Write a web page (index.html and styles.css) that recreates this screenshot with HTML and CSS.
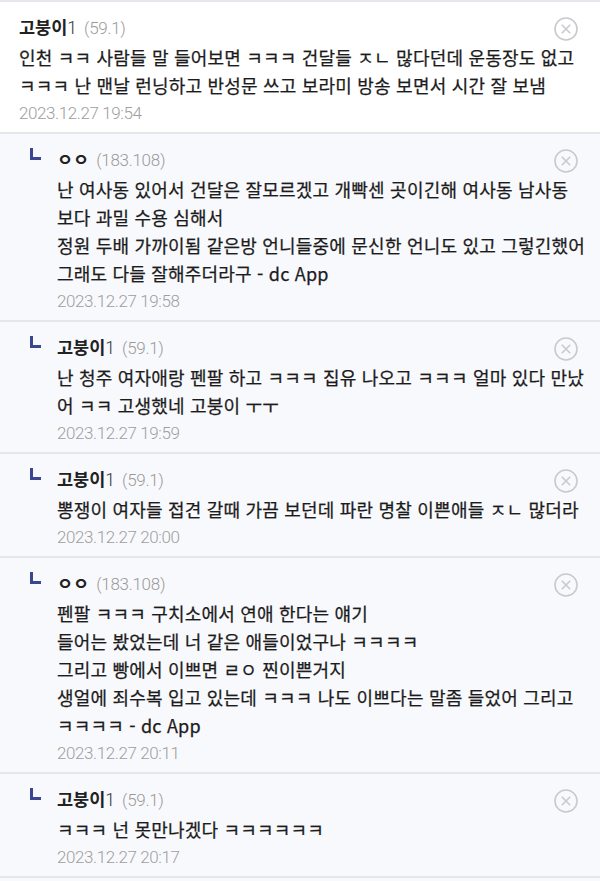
FILE: index.html
```html
<!DOCTYPE html>
<html lang="ko">
<head>
  <meta charset="UTF-8" />
  <meta name="viewport" content="width=device-width, initial-scale=1.0"/>
  <title>댓글</title>
  <link rel="stylesheet" href="styles.css">
</head>
<body>
  <ul class="cmt-list">
    <li class="cmt">
      <div class="cmt-body">
        <div class="cmt-head"><span class="nick">고붕이<span class="nick-no">1</span></span><span class="ip">(59.1)</span></div>
        <p class="cmt-txt">인천 ㅋㅋ 사람들 말 들어보면 ㅋㅋㅋ 건달들 ㅈㄴ 많다던데 운동장도 없고<br>ㅋㅋㅋ 난 맨날 런닝하고 반성문 쓰고 보라미 방송 보면서 시간 잘 보냄</p>
        <div class="cmt-date">2023.12.27 19:54</div>
      </div>
      <button class="del-btn" title="삭제">
        <svg width="24" height="24" viewBox="0 0 24 24"><circle cx="12" cy="12" r="11" /><path d="M7.8 7.8l8.4 8.4M16.2 7.8l-8.4 8.4" /></svg>
      </button>
    </li>

    <li class="cmt reply">
      <span class="reply-mark"></span>
      <div class="cmt-body">
        <div class="cmt-head"><span class="nick">ㅇㅇ</span><span class="ip">(183.108)</span></div>
        <p class="cmt-txt">난 여사동 있어서 건달은 잘모르겠고 개빡센 곳이긴해 여사동 남사동<br>보다 과밀 수용 심해서<br>정원 두배 가까이됨 같은방 언니들중에 문신한 언니도 있고 그렇긴했어<br>그래도 다들 잘해주더라구 - dc App</p>
        <div class="cmt-date">2023.12.27 19:58</div>
      </div>
      <button class="del-btn" title="삭제">
        <svg width="24" height="24" viewBox="0 0 24 24"><circle cx="12" cy="12" r="11" /><path d="M7.8 7.8l8.4 8.4M16.2 7.8l-8.4 8.4" /></svg>
      </button>
    </li>

    <li class="cmt reply">
      <span class="reply-mark"></span>
      <div class="cmt-body">
        <div class="cmt-head"><span class="nick">고붕이<span class="nick-no">1</span></span><span class="ip">(59.1)</span></div>
        <p class="cmt-txt">난 청주 여자애랑 펜팔 하고 ㅋㅋㅋ 집유 나오고 ㅋㅋㅋ 얼마 있다 만났<br>어 ㅋㅋ 고생했네 고붕이 ㅜㅜ</p>
        <div class="cmt-date">2023.12.27 19:59</div>
      </div>
      <button class="del-btn" title="삭제">
        <svg width="24" height="24" viewBox="0 0 24 24"><circle cx="12" cy="12" r="11" /><path d="M7.8 7.8l8.4 8.4M16.2 7.8l-8.4 8.4" /></svg>
      </button>
    </li>

    <li class="cmt reply">
      <span class="reply-mark"></span>
      <div class="cmt-body">
        <div class="cmt-head"><span class="nick">고붕이<span class="nick-no">1</span></span><span class="ip">(59.1)</span></div>
        <p class="cmt-txt">뽕쟁이 여자들 접견 갈때 가끔 보던데 파란 명찰 이쁜애들 ㅈㄴ 많더라</p>
        <div class="cmt-date">2023.12.27 20:00</div>
      </div>
      <button class="del-btn" title="삭제">
        <svg width="24" height="24" viewBox="0 0 24 24"><circle cx="12" cy="12" r="11" /><path d="M7.8 7.8l8.4 8.4M16.2 7.8l-8.4 8.4" /></svg>
      </button>
    </li>

    <li class="cmt reply">
      <span class="reply-mark"></span>
      <div class="cmt-body">
        <div class="cmt-head"><span class="nick">ㅇㅇ</span><span class="ip">(183.108)</span></div>
        <p class="cmt-txt">펜팔 ㅋㅋㅋ 구치소에서 연애 한다는 얘기<br>들어는 봤었는데 너 같은 애들이었구나 ㅋㅋㅋㅋ<br>그리고 빵에서 이쁘면 ㄹㅇ 찐이쁜거지<br>생얼에 죄수복 입고 있는데 ㅋㅋㅋ 나도 이쁘다는 말좀 들었어 그리고<br>ㅋㅋㅋㅋ - dc App</p>
        <div class="cmt-date">2023.12.27 20:11</div>
      </div>
      <button class="del-btn" title="삭제">
        <svg width="24" height="24" viewBox="0 0 24 24"><circle cx="12" cy="12" r="11" /><path d="M7.8 7.8l8.4 8.4M16.2 7.8l-8.4 8.4" /></svg>
      </button>
    </li>

    <li class="cmt reply">
      <span class="reply-mark"></span>
      <div class="cmt-body">
        <div class="cmt-head"><span class="nick">고붕이<span class="nick-no">1</span></span><span class="ip">(59.1)</span></div>
        <p class="cmt-txt">ㅋㅋㅋ 넌 못만나겠다 ㅋㅋㅋㅋㅋㅋ</p>
        <div class="cmt-date">2023.12.27 20:17</div>
      </div>
      <button class="del-btn" title="삭제">
        <svg width="24" height="24" viewBox="0 0 24 24"><circle cx="12" cy="12" r="11" /><path d="M7.8 7.8l8.4 8.4M16.2 7.8l-8.4 8.4" /></svg>
      </button>
    </li>
  </ul>
</body>
</html>
```

FILE: styles.css
```css
html, body {
  margin: 0;
  padding: 0;
  background: #f8f9fc;
  font-family: 'Noto Sans CJK KR', 'Noto Sans', sans-serif;
  color: #1c1c1c;
}

.cmt-list {
  list-style: none;
  margin: 0;
  padding: 0;
  border-top: 2px solid #e6e7ec;
}

.cmt {
  display: flex;
  align-items: flex-start;
  padding: 12px 22px 6px 19px;
  background: #fff;
  border-bottom: 2px solid #e6e7ec;
}
.cmt.reply {
  background: #f8f9fc;
  padding-left: 30px;
}

.reply-mark {
  flex-shrink: 0;
  width: 8px;
  height: 9px;
  margin: 2px 16px 0 0;
  border-left: 3px solid #3b4690;
  border-bottom: 3px solid #3b4690;
}

.cmt-body {
  flex: 1;
  min-width: 0;
}

.cmt-head {
  height: 26px;
  line-height: 26px;
  white-space: nowrap;
}
.nick {
  font-size: 17.5px;
  font-weight: bold;
  color: #222;
}
.nick-no {
  font-family: 'Roboto', sans-serif;
  font-weight: 300;
  color: #333;
}
.ip {
  font-family: 'Roboto', sans-serif;
  font-size: 17px;
  font-weight: 300;
  letter-spacing: -0.3px;
  color: #9a9a9a;
  margin-left: 7px;
}

.cmt-txt {
  margin: 3px 0 0;
  font-size: 18px;
  line-height: 28px;
  letter-spacing: 0.2px;
  -webkit-text-stroke: 0.25px currentColor;
  white-space: nowrap;
}

.cmt-date {
  margin-top: 1px;
  height: 26px;
  line-height: 26px;
  font-family: 'Roboto', sans-serif;
  font-size: 17px;
  font-weight: 300;
  letter-spacing: -0.4px;
  color: #9e9e9e;
}

.del-btn {
  flex-shrink: 0;
  margin: 3px 0 0 8px;
  padding: 0;
  border: none;
  background: none;
  width: 24px;
  height: 24px;
  cursor: pointer;
}
.del-btn svg {
  display: block;
  fill: none;
  stroke: #c9c9ce;
  stroke-width: 1.6;
}
```
